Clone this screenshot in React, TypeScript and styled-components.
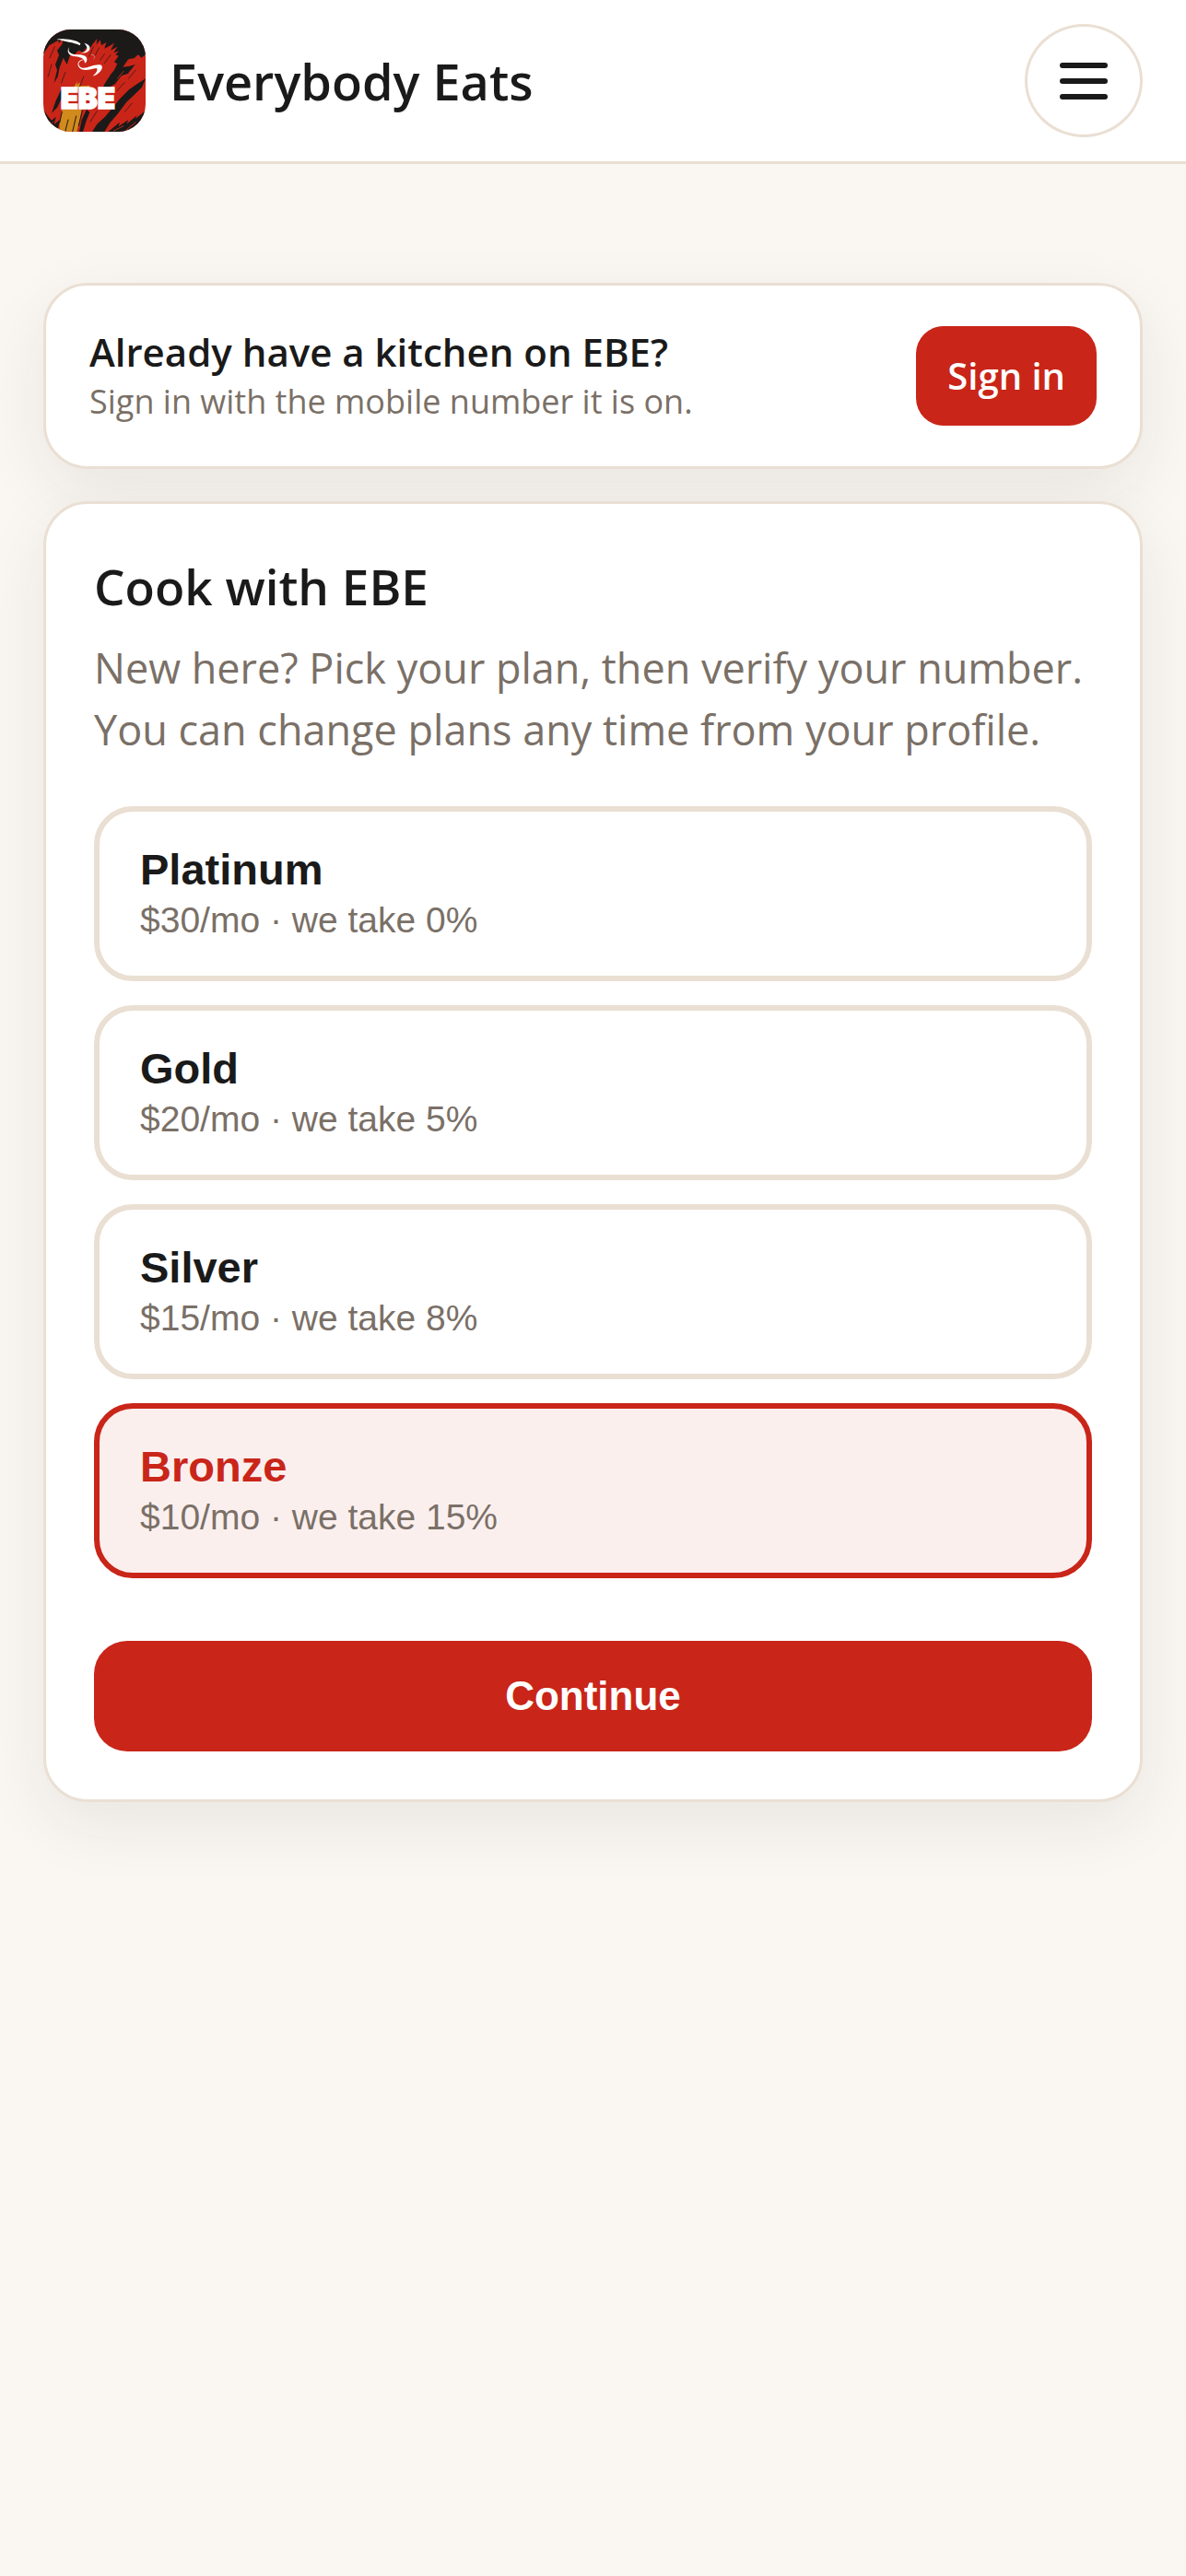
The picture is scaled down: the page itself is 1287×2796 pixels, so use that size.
import { useState } from 'react';
import styled, { createGlobalStyle } from 'styled-components';

const PLANS = [
    { id: 'platinum', name: 'Platinum', price: 30, cut: 0 },
    { id: 'gold', name: 'Gold', price: 20, cut: 5 },
    { id: 'silver', name: 'Silver', price: 15, cut: 8 },
    { id: 'bronze', name: 'Bronze', price: 10, cut: 15 },
];

const GlobalStyle = createGlobalStyle`
    * {
        box-sizing: border-box;
    }

    body {
        margin: 0;
        background-color: #faf7f2;
        color: #1a1a1a;
        font-family: 'Trebuchet MS', 'Open Sans', sans-serif;
    }

    h1, h2, p {
        margin: 0;
    }
`;

const Header = styled.header`
    display: flex;
    justify-content: space-between;
    align-items: center;
    padding: 26px 47px;
    background-color: #fff;
    border-bottom: 3px solid #eadfd3;
`;

const Brand = styled.a`
    display: flex;
    align-items: center;
    gap: 26px;
    color: inherit;
    text-decoration: none;
`;

const LogoImage = styled.svg`
    width: 111px;
    height: 111px;
    border-radius: 30px;
`;

const LogoText = styled.text`
    font-family: Inter, sans-serif;
    font-size: 94px;
    font-weight: 900;
    fill: #fff;
    stroke: #fff;
    stroke-width: 5px;
`;

const BrandName = styled.span`
    font-size: 54px;
    font-weight: 600;
    line-height: 76px;
`;

const MenuButton = styled.button`
    display: flex;
    justify-content: center;
    align-items: center;
    width: 128px;
    height: 123px;
    padding: 0;
    background-color: #fff;
    border: 3px solid #eadfd3;
    border-radius: 50%;
`;

const Main = styled.main`
    display: flex;
    flex-direction: column;
    gap: 35px;
    padding: 129px 47px;
`;

const Card = styled.section`
    background-color: #fff;
    border: 3px solid #eadfd3;
    border-radius: 48px;
    box-shadow: 0 24px 72px rgba(40, 30, 20, 0.08);
`;

const SignInCard = styled(Card)`
    display: flex;
    justify-content: space-between;
    align-items: center;
    padding: 44px 47px;
`;

const PlanCard = styled(Card)`
    padding: 52px;
`;

const SignInTitle = styled.p`
    font-size: 42px;
    font-weight: 600;
    line-height: 56px;
`;

const SignInText = styled.p`
    color: #7a7067;
    font-size: 36px;
    line-height: 52px;
`;

const SignInLink = styled.a`
    padding: 26px 34px;
    background-color: #c92519;
    border-radius: 30px;
    color: #fff;
    font-size: 40px;
    font-weight: 600;
    line-height: 56px;
    text-decoration: none;
`;

const Title = styled.h1`
    font-size: 53px;
    font-weight: 600;
    line-height: 76px;
`;

const Intro = styled.p`
    margin-top: 16px;
    color: #7a7067;
    font-size: 45px;
    line-height: 67px;
`;

const PlanList = styled.div`
    display: flex;
    flex-direction: column;
    gap: 26px;
    margin-top: 50px;
`;

const PlanButton = styled.button<{ $active: boolean }>`
    display: flex;
    flex-direction: column;
    gap: 4px;
    padding: 36px 44px;
    background-color: ${({ $active }) => ($active ? '#fbefee' : '#fff')};
    border: 6px solid ${({ $active }) => ($active ? '#c92519' : '#eadfd3')};
    border-radius: 42px;
    color: ${({ $active }) => ($active ? '#c92519' : '#1a1a1a')};
    font-family: 'Liberation Sans', Arial, sans-serif;
    text-align: left;
`;

const PlanName = styled.span`
    font-size: 47px;
    font-weight: 700;
    line-height: 54px;
`;

const PlanPrice = styled.span`
    color: #7a7067;
    font-size: 39px;
    line-height: 48px;
`;

const ContinueButton = styled.button`
    width: 100%;
    margin-top: 68px;
    padding: 34px;
    background-color: #c92519;
    border: none;
    border-radius: 36px;
    color: #fff;
    font-family: 'Liberation Sans', Arial, sans-serif;
    font-size: 44px;
    font-weight: 700;
    line-height: 52px;
`;

const Logo = () => (
    <LogoImage viewBox="51 36 333 333" role="img" aria-label="EBE">
        <rect x="51" y="36" width="333" height="333" fill="#c92519" />
        {/* dark sky with the ragged ends of the brush strokes */}
        <path
            fill="#1b1a19"
            d="M51 36 H384 V118 L370 128 L360 118 L346 130 L330 132 L318 142 L304 160 L290 176 L270 188 L284 164 L292 148 L282 142 L296 122 L286 118 L298 106 L280 112 L292 92 L270 104 L282 80 L262 92 L250 98 L256 78 L240 88 L236 70 L224 86 L226 66 L210 86 L198 104 L190 96 L180 110 L166 104 L152 118 L140 114 L128 150 L116 128 L104 160 L98 190 L86 210 L96 168 L90 150 L102 120 L96 104 L112 84 L116 66 L100 82 L102 70 L84 80 L70 88 L58 106 L51 116 Z"
        />
        {/* gaps between strokes */}
        <g fill="#1b1a19">
            <path d="M326 136 L310 158 L330 156 L350 150 L326 180 L306 186 L284 214 L262 226 L240 240 L250 214 L272 180 L300 150 Z" />
            <path d="M384 196 L372 224 L346 250 L322 272 L294 310 L268 340 L250 369 L210 369 L226 344 L252 320 L276 292 L300 262 L330 232 L358 212 Z" />
            <path d="M384 300 L384 369 L262 369 L300 338 L296 352 L328 330 L322 344 L356 316 L350 328 Z" />
            <path d="M51 296 L66 318 L78 332 L92 320 L86 346 L104 330 L98 369 L51 369 Z" />
            <path d="M112 226 L92 268 L78 308 L96 290 L110 262 Z" />
            <path d="M192 296 L176 330 L168 369 L180 369 L190 336 L202 306 Z" />
        </g>
        <g fill="#d18a1c">
            <path d="M112 296 L176 296 L170 330 L160 369 L104 369 L104 346 Z" />
            <path d="M148 228 L162 204 L160 216 L172 208 L168 220 L204 218 L196 230 Z" />
        </g>
        {/* bristle marks */}
        <g stroke="#1b1a19" strokeLinecap="round" fill="none">
            <path strokeWidth="2" d="M88 92 L72 128 M78 150 L66 190 M122 176 L110 210 M214 92 L200 124 M232 96 L220 120" />
            <path strokeWidth="2" d="M182 190 L168 226 M250 116 L236 136 M270 118 L250 146 M226 302 L204 336" />
            <path strokeWidth="3" d="M112 304 L104 340 M132 330 L122 369 M158 318 L146 369 M178 300 L166 350" />
            <path strokeWidth="2" d="M316 208 L290 236 M352 168 L328 196 M340 276 L316 304" />
        </g>
        <g stroke="#c92519" strokeLinecap="round" fill="none">
            <path strokeWidth="3" d="M68 352 L84 336 M280 366 L312 350 M322 362 L352 338 M292 196 L312 172" />
        </g>
        {/* steam */}
        <path fill="#fff" d="M94 67 C118 66 158 68 172 82 L170 88 C150 78 122 76 94 67 Z" />
        <path fill="#fff" d="M184 80 C204 84 208 100 196 108 C190 112 180 114 174 112 C194 108 200 96 184 80 Z" />
        <path
            fill="#fff"
            d="M136 92 C128 108 140 116 158 118 C180 116 198 122 192 140 L186 146 C186 130 172 126 156 124 C134 122 124 108 136 92 Z"
        />
        <path
            fill="#fff"
            d="M186 134 C168 136 160 148 172 158 C188 170 214 146 240 152 C250 164 228 184 212 188 C224 176 230 168 224 162 C206 164 184 174 170 162 C156 150 166 132 186 134 Z"
        />
        <path fill="none" stroke="#e8a79f" strokeWidth="2" d="M206 118 C218 118 222 126 214 132" />
        <LogoText x="107" y="295">
            EBE
        </LogoText>
    </LogoImage>
);

const MenuIcon = () => (
    <svg width="54" height="42" viewBox="0 0 54 42" aria-hidden="true">
        <path d="M4 4H50M4 21H50M4 38H50" stroke="#1a1a1a" strokeWidth="6" strokeLinecap="round" />
    </svg>
);

const App = () => {
    const [plan, setPlan] = useState<string>('bronze');

    return (
        <>
            <GlobalStyle />
            <Header>
                <Brand href="#home">
                    <Logo />
                    <BrandName>Everybody Eats</BrandName>
                </Brand>
                <MenuButton type="button" aria-label="Menu">
                    <MenuIcon />
                </MenuButton>
            </Header>
            <Main>
                <SignInCard>
                    <div>
                        <SignInTitle>Already have a kitchen on EBE?</SignInTitle>
                        <SignInText>Sign in with the mobile number it is on.</SignInText>
                    </div>
                    <SignInLink href="#sign-in">Sign in</SignInLink>
                </SignInCard>
                <PlanCard>
                    <Title>Cook with EBE</Title>
                    <Intro>
                        New here? Pick your plan, then verify your number. You can change plans any time from your profile.
                    </Intro>
                    <PlanList>
                        {PLANS.map(({ id, name, price, cut }) => (
                            <PlanButton
                                key={id}
                                type="button"
                                aria-pressed={plan === id}
                                $active={plan === id}
                                onClick={() => setPlan(id)}
                            >
                                <PlanName>{name}</PlanName>
                                <PlanPrice>{`$${price}/mo · we take ${cut}%`}</PlanPrice>
                            </PlanButton>
                        ))}
                    </PlanList>
                    <ContinueButton type="button">Continue</ContinueButton>
                </PlanCard>
            </Main>
        </>
    );
};

export default App;
